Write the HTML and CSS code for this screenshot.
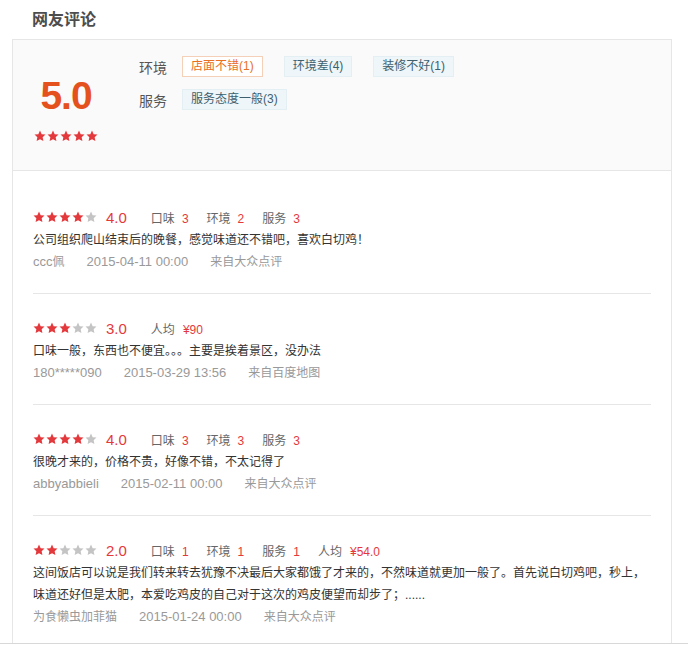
FILE: index.html
```html
<!DOCTYPE html>
<html lang="zh-CN">
<head>
  <meta charset="UTF-8">
  <title>网友评论</title>
  <link rel="stylesheet" href="styles.css">
</head>
<body>

<svg class="sprite" width="0" height="0">
  <symbol id="star" viewBox="0 0 24 24">
    <path d="M12 1.2l3.3 7.1 7.7.9-5.7 5.3 1.5 7.7L12 18.4l-6.8 3.8 1.5-7.7L1 9.2l7.7-.9z"/>
  </symbol>
</svg>

<div class="page">
  <h2 class="title">网友评论</h2>

  <div class="comments">
    <div class="summary">
      <div class="score-box">
        <div class="score">5.0</div>
        <div class="stars">
          <svg class="on"><use href="#star"/></svg><svg class="on"><use href="#star"/></svg><svg class="on"><use href="#star"/></svg><svg class="on"><use href="#star"/></svg><svg class="on"><use href="#star"/></svg>
        </div>
      </div>
      <div class="tag-rows">
        <div class="tag-row">
          <span class="tag-label">环境</span>
          <span class="tag tag-good">店面不错(1)</span>
          <span class="tag">环境差(4)</span>
          <span class="tag">装修不好(1)</span>
        </div>
        <div class="tag-row">
          <span class="tag-label">服务</span>
          <span class="tag">服务态度一般(3)</span>
        </div>
      </div>
    </div>

    <ul class="review-list">
      <li class="review">
        <div class="review-head">
          <div class="stars">
            <svg class="on"><use href="#star"/></svg><svg class="on"><use href="#star"/></svg><svg class="on"><use href="#star"/></svg><svg class="on"><use href="#star"/></svg><svg><use href="#star"/></svg>
          </div>
          <span class="review-score">4.0</span>
          <span class="item">口味<em>3</em></span>
          <span class="item">环境<em>2</em></span>
          <span class="item">服务<em>3</em></span>
        </div>
        <p class="review-text">公司组织爬山结束后的晚餐，感觉味道还不错吧，喜欢白切鸡！</p>
        <div class="meta"><span class="en">ccc</span><span class="user">佩</span><span class="en">2015-04-11 00:00</span><span>来自大众点评</span></div>
      </li>

      <li class="review">
        <div class="review-head">
          <div class="stars">
            <svg class="on"><use href="#star"/></svg><svg class="on"><use href="#star"/></svg><svg class="on"><use href="#star"/></svg><svg><use href="#star"/></svg><svg><use href="#star"/></svg>
          </div>
          <span class="review-score">3.0</span>
          <span class="item">人均<em class="price">¥90</em></span>
        </div>
        <p class="review-text">口味一般，东西也不便宜。。。主要是挨着景区，没办法</p>
        <div class="meta"><span class="en user">180*****090</span><span class="en">2015-03-29 13:56</span><span>来自百度地图</span></div>
      </li>

      <li class="review">
        <div class="review-head">
          <div class="stars">
            <svg class="on"><use href="#star"/></svg><svg class="on"><use href="#star"/></svg><svg class="on"><use href="#star"/></svg><svg class="on"><use href="#star"/></svg><svg><use href="#star"/></svg>
          </div>
          <span class="review-score">4.0</span>
          <span class="item">口味<em>3</em></span>
          <span class="item">环境<em>3</em></span>
          <span class="item">服务<em>3</em></span>
        </div>
        <p class="review-text">很晚才来的，价格不贵，好像不错，不太记得了</p>
        <div class="meta"><span class="en user">abbyabbieli</span><span class="en">2015-02-11 00:00</span><span>来自大众点评</span></div>
      </li>

      <li class="review">
        <div class="review-head">
          <div class="stars">
            <svg class="on"><use href="#star"/></svg><svg class="on"><use href="#star"/></svg><svg><use href="#star"/></svg><svg><use href="#star"/></svg><svg><use href="#star"/></svg>
          </div>
          <span class="review-score">2.0</span>
          <span class="item">口味<em>1</em></span>
          <span class="item">环境<em>1</em></span>
          <span class="item">服务<em>1</em></span>
          <span class="item">人均<em class="price">¥54.0</em></span>
        </div>
        <p class="review-text">这间饭店可以说是我们转来转去犹豫不决最后大家都饿了才来的，不然味道就更加一般了。首先说白切鸡吧，秒上，味道还好但是太肥，本爱吃鸡皮的自己对于这次的鸡皮便望而却步了；......</p>
        <div class="meta"><span class="user">为食懒虫加菲猫</span><span class="en">2015-01-24 00:00</span><span>来自大众点评</span></div>
      </li>
    </ul>
  </div>
</div>

</body>
</html>
```

FILE: styles.css
```css
html, body {
  margin: 0; padding: 0;
  background: #fff;
  color: #333;
}
body { font-family: 'Liberation Sans', 'Noto Sans CJK SC', sans-serif; font-size: 12px; }

.sprite { position: absolute; width: 0; height: 0; overflow: hidden; }

.page {
  height: 643px;
  overflow: hidden;
  border-bottom: 1px solid #d8d8d8;
  padding-left: 12px;
}
.title {
  margin: 0;
  padding-left: 20px;
  height: 39px;
  line-height: 39px;
  font-size: 16px;
  font-weight: 700;
  color: #4d4d4d;
}

.comments {
  width: 658px;
  border: 1px solid #e6e6e6;
}

/* Сводка */
.summary {
  display: flex;
  height: 130px;
  background: #fafafa;
  border-bottom: 1px solid #e6e6e6;
}
.score-box {
  width: 106px;
  padding-top: 36px;
  display: flex;
  flex-direction: column;
  align-items: center;
}
.score {
  font-size: 39px;
  line-height: 40px;
  font-weight: 700;
  color: #e5511d;
  letter-spacing: -1px;
}
.score-box .stars { margin-top: 14px; }

.tag-rows {
  margin-left: 20px;
  padding-top: 16px;
}
.tag-row {
  display: flex;
  align-items: center;
  height: 21px;
  margin-bottom: 12px;
}
.tag-label {
  font-size: 14px;
  color: #555;
  margin-right: 15px;
}
.tag {
  box-sizing: border-box;
  height: 21px;
  line-height: 19px;
  padding: 0 8px;
  margin-right: 21px;
  border: 1px solid #e4eff3;
  background: #eef6f9;
  color: #3e5f6e;
}
.tag-good {
  border-color: #f5d0b8;
  background: #fff;
  color: #e8701f;
}

/* Звёзды */
.stars {
  display: flex;
  gap: 1px;
  height: 12px;
}
.stars svg {
  width: 12px;
  height: 12px;
  fill: #c4c4c4;
}
.stars svg.on { fill: #e4393c; }

/* Отзывы */
.review-list {
  list-style: none;
  margin: 0;
  padding: 12px 20px 0 20px;
}
.review {
  padding: 22px 0 20px 0;
  border-bottom: 1px solid #e6e6e6;
}
.review-head {
  display: flex;
  align-items: center;
  height: 24px;
}
.review-score {
  font-size: 15px;
  color: #e4393c;
  margin: 0 24px 0 9px;
}
.item {
  color: #666;
  margin-right: 18px;
}
.item em {
  font-style: normal;
  color: #e4393c;
  margin-left: 7px;
}
.item em.price { margin-left: 8px; }

.review-text {
  margin: 0;
  line-height: 22px;
  color: #333;
}
.meta {
  line-height: 22px;
  color: #999;
}
.meta span.en { font-size: 13px; }
.meta span { margin-right: 22px; }
.meta span.en:first-child:not(.user) { margin-right: 0; }
```
